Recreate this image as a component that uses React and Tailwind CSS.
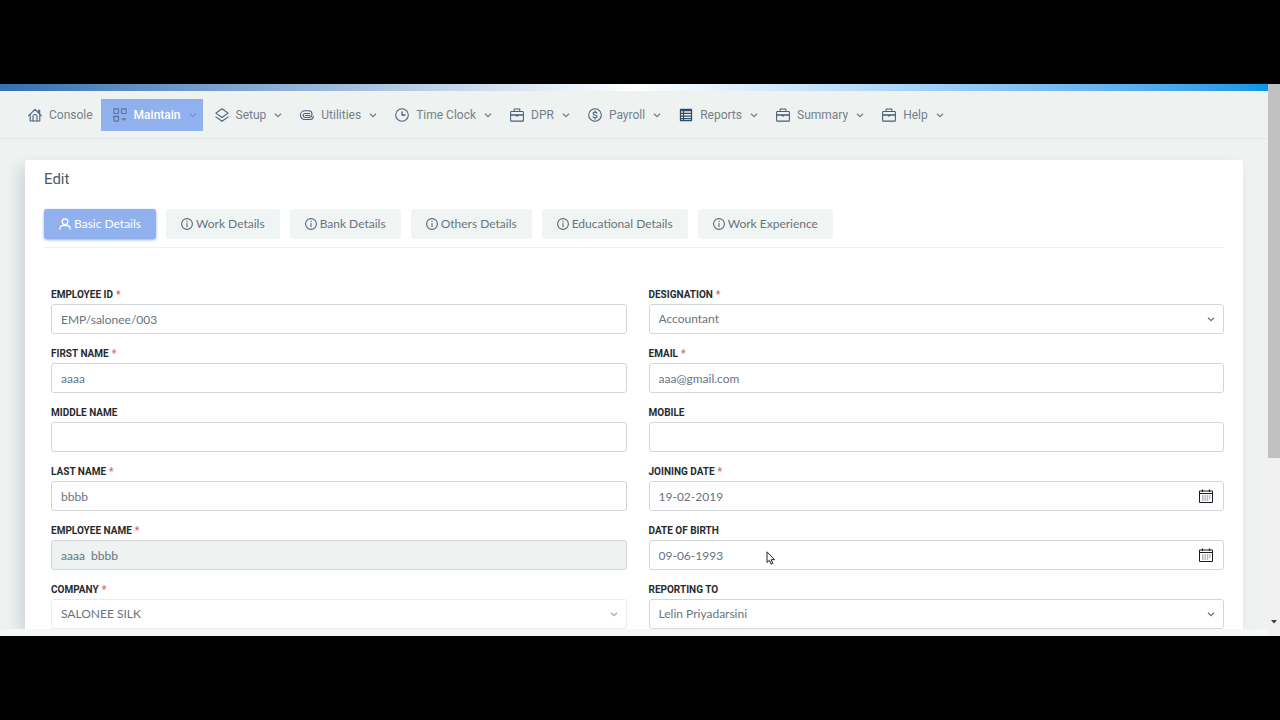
import React from "react";

const ink = "#475f7b";

function Svg({ children, size = "size-3.5", stroke = ink, width = 1.2 }) {
  return (
    <svg className={`${size} shrink-0`} viewBox="0 0 16 16" fill="none" stroke={stroke} strokeWidth={width} strokeLinejoin="round" strokeLinecap="round" aria-hidden="true">
      {children}
    </svg>
  );
}

const Home = () => (
  <Svg>
    <path d="M.7 9 8 1.5 15.3 9" />
    <path d="M11.8 5V2.6h1.6v4.2" />
    <path d="M2.5 7.6v7.2h11V7.6" />
    <path d="M5.7 14.6V9.8a2.3 2.3 0 0 1 4.6 0v4.8" />
  </Svg>
);
const Blocks = () => (
  <Svg stroke="#5b7396">
    <rect x="1" y="1" width="5.3" height="5.3" rx=".6" />
    <rect x="9.7" y="1" width="5.3" height="5.3" rx=".6" />
    <rect x="1" y="9.7" width="5.3" height="5.3" rx=".6" />
    <path d="M1 9.7h5.3M10.4 12.5h4M12.4 12.5v1.2" strokeWidth="1.5" />
  </Svg>
);
const Layers = () => (
  <Svg>
    <path d="m8 .8 7 5-7 5-7-5z" />
    <path d="m1 10.2 7 5 7-5" />
  </Svg>
);
const Clip = () => (
  <Svg>
    <path d="M10 13.200H5.500a4.900 4.900 0 0 1 0-10h5.500a4 4 0 0 1 0 7.600H6a2.300 2.300 0 0 1 0-4.600h5" />
    <path d="M6.200 8.500h5M10 13.200h1.800a3.800 3.800 0 0 0 3.400-3.700" />
  </Svg>
);
const Clock = () => (
  <Svg>
    <circle cx="8" cy="8" r="7.2" />
    <path d="M8 4.4V8h3.4" strokeWidth="1.5" />
  </Svg>
);
const Case = () => (
  <Svg>
    <rect x=".7" y="4" width="14.6" height="11" rx=".8" />
    <path d="M4.8 3.8V1.2h6.4v2.6" />
    <path d="M.8 8h14.4M7.4 8.8h1.2" strokeWidth="1.8" />
  </Svg>
);
const Dollar = () => (
  <Svg>
    <circle cx="8" cy="8" r="7.2" />
    <path d="M10.2 5.9C9.8 5 9 4.7 8 4.7c-1.3 0-2.2.6-2.2 1.6C5.8 8.5 10.3 7.4 10.3 9.7c0 1-1 1.6-2.3 1.6-1.2 0-2-.4-2.4-1.4M8 3.3v1.3M8 11.4v1.3" />
  </Svg>
);
const Sheet = () => (
  <Svg stroke="#304c66" width={1.4}>
    <rect x="1.7" y="1.5" width="12.6" height="13" />
    <path d="M1.7 3h12.6M1.7 6.2h12.6M1.7 9.2h12.6M1.7 12.2h12.6M5.2 2v12" />
  </Svg>
);
const Chevron = ({ stroke = "#7b8790" }) => (
  <svg className="h-2 w-2.5 shrink-0" viewBox="0 0 10 8" fill="none" stroke={stroke} strokeWidth="1.3" aria-hidden="true">
    <path d="m2 2.7 3 3 3-3" />
  </svg>
);
const User = () => (
  <Svg size="size-3" stroke="#fff" width={1.7}>
    <circle cx="8" cy="5" r="3.7" />
    <path d="M1.2 15v-1a4 4 0 0 1 4-4h5.6a4 4 0 0 1 4 4v1" />
  </Svg>
);
const Info = () => (
  <Svg size="size-3" stroke="#5a6a7a" width={1.5}>
    <circle cx="8" cy="8" r="7.2" />
    <path d="M8 7.3v4.4M8 4.2v.8" />
  </Svg>
);
const Calendar = () => (
  <svg className="size-3.5" viewBox="0 0 14 14" fill="none" stroke="#1c1c22" aria-hidden="true">
    <path d="M.5 2h13v11.5H.5z" />
    <path d="M.5 4.5h13" />
    <path d="M3.5.5v2.5M10.5.5v2.5" strokeWidth="1.2" />
    <path d="M3 7h8.5M3 9h8.5M3 11h6.5" strokeDasharray="1.4 1" stroke="#6a6a70" />
  </svg>
);

const menu = [
  ["Maintain", Blocks],
  ["Setup", Layers],
  ["Utilities", Clip],
  ["Time Clock", Clock],
  ["DPR", Case],
  ["Payroll", Dollar],
  ["Reports", Sheet],
  ["Summary", Case],
  ["Help", Case],
];

const tabs = ["Basic Details", "Work Details", "Bank Details", "Others Details", "Educational Details", "Work Experience"];

const fields = [
  { id: "employee-id", label: "Employee ID", req: true, value: "EMP/salonee/003" },
  { id: "designation", label: "Designation", req: true, value: "Accountant", kind: "select" },
  { id: "first-name", label: "First Name", req: true, value: "aaaa" },
  { id: "email", label: "Email", req: true, value: "aaa@gmail.com" },
  { id: "middle-name", label: "Middle Name", value: "" },
  { id: "mobile", label: "Mobile", value: "" },
  { id: "last-name", label: "Last Name", req: true, value: "bbbb" },
  { id: "joining-date", label: "Joining Date", req: true, value: "19-02-2019", kind: "date" },
  { id: "employee-name", label: "Employee Name", req: true, value: "aaaa  bbbb", kind: "locked" },
  { id: "birth-date", label: "Date of Birth", value: "09-06-1993", kind: "date" },
  { id: "company", label: "Company", req: true, value: "SALONEE SILK", kind: "select", faint: true },
  { id: "reporting-to", label: "Reporting To", value: "Lelin Priyadarsini", kind: "select" },
];

function Field({ id, label, req, value, kind, faint }) {
  const box = "h-[30px] w-full rounded-[3px] border px-[9px] font-[Lato,sans-serif] text-xs text-[#68747f] outline-none";
  return (
    <div>
      <label htmlFor={id} className="mb-0.5 block text-[10px] leading-[15px] font-bold text-[#272b30] uppercase">
        {label}
        {req && <span className="ml-[3px] text-[#d9646a]">*</span>}
      </label>
      <div className="relative">
        {kind === "select" ? (
          <>
            <select id={id} defaultValue={value} className={`${box} block appearance-none bg-white ${faint ? "border-[#e9ebec]" : "border-[#d3d6d8]"}`}>
              <option>{value}</option>
            </select>
            <span className="pointer-events-none absolute inset-y-0 right-2 flex items-center">
              <Chevron stroke={faint ? "#a5abb0" : "#6b747b"} />
            </span>
          </>
        ) : (
          <input id={id} type="text" defaultValue={value} readOnly={kind === "locked"} className={`${box} block border-[#d3d6d8] ${kind === "locked" ? "bg-[#eef2f1]" : "bg-white"}`} />
        )}
        {kind === "date" && (
          <button type="button" aria-label={`Choose ${label}`} className="absolute inset-y-0 right-[11px] flex items-center">
            <Calendar />
          </button>
        )}
      </div>
    </div>
  );
}

export default function App() {
  return (
    <div className="flex h-screen flex-col bg-black py-[84px] font-[Roboto,sans-serif]">
      <div className="relative flex min-h-0 flex-1 overflow-hidden bg-[#f5f6f6]">
        <div className="flex min-w-0 flex-1 flex-col bg-[#eef2f1]">
          <div className="h-[7px] shrink-0 bg-linear-to-r from-[#3470b2] via-white to-[#0996e8]" />
          <nav className="flex h-12 shrink-0 items-center border-b border-[#e2e7e7] pl-7 text-xs text-[#75808a]">
            <a href="#console" className="flex items-center gap-[7px] pr-2">
              <Home />
              Console
            </a>
            {menu.map(([name, Icon], i) => (
              <button key={name} type="button" className={`flex h-8 items-center pr-[5px] pl-3 ${i === 0 ? "bg-[#90b0ee] font-medium text-white" : ""}`}>
                <Icon />
                <span className="mx-[7px]">{name}</span>
                <Chevron stroke={i === 0 ? "#7595d6" : "#75808a"} />
              </button>
            ))}
          </nav>
          <main className="flex min-h-0 flex-1 flex-col overflow-hidden px-[25px] pt-[21px]">
            <section className="flex-1 rounded-t-[3px] bg-white px-[19px] pt-[7px] shadow-[-6px_6px_14px_rgba(30,50,70,0.14)]">
              <h1 className="text-[15px] leading-6 text-[#4d5965]">Edit</h1>
              <div className="mt-[18px] flex gap-[10px] border-b border-[#eff2f2] pb-2">
                {tabs.map((t, i) => (
                  <button key={t} type="button" className={`flex h-[30px] items-center gap-[3px] rounded-[3px] px-[15px] font-[Lato,sans-serif] text-xs ${i === 0 ? "bg-[#90b0ee] text-white shadow-[0_1px_3px_#90b0ee]" : "bg-[#f0f4f3] text-[#68747f]"}`}>
                    {i === 0 ? <User /> : <Info />}
                    {t}
                  </button>
                ))}
              </div>
              <form className="mt-[39px] ml-[7px] grid grid-cols-2 gap-x-[22px] gap-y-3">
                {fields.map((f) => (
                  <Field key={f.id} {...f} />
                ))}
              </form>
            </section>
          </main>
          <div className="h-[7px] shrink-0 bg-[#f5f6f6]" />
        </div>
        <div className="flex w-3 shrink-0 flex-col items-center justify-between bg-[#f1f1f1]">
          <div className="h-[374px] w-full bg-[#c1c1c1]" />
          <svg className="mb-3 h-1 w-2" viewBox="0 0 8 4" aria-hidden="true">
            <path d="M1 0h6L4 3.5z" fill="#404040" />
          </svg>
        </div>
        <svg className="pointer-events-none absolute top-[467px] left-[766px] h-3.5 w-2.5" viewBox="0 0 10 14" fill="#fff" stroke="#222" aria-hidden="true">
          <path d="M1 .8v10.7l2.4-2.2 1.7 3.9 1.7-.8-1.7-3.7h3.5z" />
        </svg>
      </div>
    </div>
  );
}
